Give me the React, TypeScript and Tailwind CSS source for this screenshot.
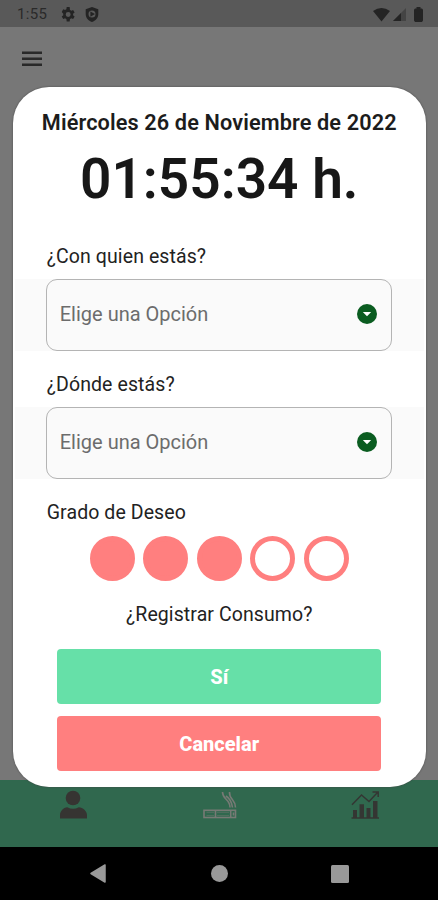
import type { ReactNode } from "react";

function StatusBar() {
  return (
    <header className="flex h-[27px] shrink-0 items-center bg-[#595959] pt-[2px] pr-[15px] pl-[17px] text-[#242424]">
      <span className="w-[43px] text-[15px] leading-none tracking-[0.3px] text-[#2a2a2a]">1:55</span>
      <svg width="15" height="15" viewBox="2 2 20 20" fill="currentColor">
        <path fillRule="evenodd" d="M19.4 13a7.500 7.500 0 0 0 0-2l2.100-1.650-2-3.460-2.500 1a7.300 7.300 0 0 0-1.700-1L14.900 2h-4l-.4 3.100a7.300 7.300 0 0 0-1.700 1l-2.500-1-2 3.460L6.400 11a7.500 7.500 0 0 0 0 2l-2.100 1.650 2 3.460 2.500-1a7.300 7.300 0 0 0 1.700 1l.4 3.100h4l.4-3.100a7.300 7.300 0 0 0 1.700-1l2.500 1 2-3.460zM12.900 8.700a3.300 3.300 0 1 1 0 6.600 3.300 3.300 0 0 1 0-6.600z" />
      </svg>
      <svg className="ml-[10px]" width="14" height="15" viewBox="0 0 14 15">
        <path fill="currentColor" fillRule="evenodd" d="M7 0 13.300 2.300V7.300C13.300 10.800 10.600 13.900 7 15 3.400 13.900.7 10.800.7 7.300V2.300zM7 3.600A3.500 3.500 0 1 0 7 10.600 3.500 3.500 0 0 0 7 3.600zM5.400 4.500 10 7.100 5.400 9.700z" />
      </svg>
      <div className="ml-auto flex items-center">
        <svg width="17" height="14" viewBox="0 0 17 14" fill="currentColor">
          <path d="M0 3Q8.500-2.800 17 3L8.500 13.500z" />
        </svg>
        <svg className="ml-[3px]" width="13" height="13" viewBox="0 0 13 13">
          <path d="M13 0V13H0z" fill="#444" />
          <path d="M8 5V13H0z" fill="#242424" />
        </svg>
        <svg className="ml-[8px]" width="9" height="15" viewBox="0 0 9 15" fill="currentColor">
          <path d="M2.500 1.500V0h4v1.500H8L9 2.800V13.500L8 15H1L0 13.500V2.800L1 1.500z" />
        </svg>
      </div>
    </header>
  );
}

function TabBar() {
  return (
    <nav className="flex h-[67px] shrink-0 items-start justify-between bg-[#30684e] pt-[10px] pr-[58px] pl-[60px]">
      <svg width="27" height="29" viewBox="0 0 27 29" fill="#363432">
        <circle cx="13" cy="8" r="7.300" />
        <path d="M0 28.500V25C0 21 3.500 17.800 7.300 17.300Q13 20.400 18.800 17.300C23 17.800 27 21 27 25V28.500z" />
      </svg>
      <svg className="ml-[2px]" width="34" height="29" viewBox="0 0 34 29" fill="none" stroke="#777a75" strokeWidth="1.600">
        <rect x="1" y="20.300" width="31.500" height="7.200" />
        <path d="M3.500 22.300H11M14 22.300H26M3.500 25.600H11M14 25.600H26" strokeWidth="0.500" />
        <path d="M12.500 20V28M27.700 20V28M30.500 22.500V25.500" />
        <path d="M19.500 2C19.500 10 27 8.500 27 17.500M26.500 2C26 10 32.500 9 32.500 17.500M23 6Q28.500 9.500 29.500 17.500" />
      </svg>
      <svg width="29" height="29" viewBox="0 0 29 29">
        <path d="M2 20H6V28H2zM8.500 14.300H13V28H8.500zM15.500 18H19.500V28H15.500zM22 11H26.500V28H22z" fill="#343633" />
        <path d="M.5 28H28M1 14.800 10.500 5 18 11.500 26.500 2.500M21.500 2H27.200V7" fill="none" stroke="#343633" strokeWidth="1.500" />
      </svg>
    </nav>
  );
}

function SystemNav() {
  return (
    <footer className="flex h-[53px] shrink-0 items-center justify-between bg-black pr-[89px] pl-[90px]">
      <svg width="16" height="19" viewBox="0 0 16 19">
        <path d="M15 1V18L1 9.500z" fill="#999" stroke="#999" strokeWidth="1.500" strokeLinejoin="round" />
      </svg>
      <span className="ml-[2px] size-[17px] rounded-full bg-[#999]" />
      <span className="size-[18px] rounded-[1.5px] bg-[#999]" />
    </footer>
  );
}

function SelectField({ label }: { label: string }) {
  return (
    <section className="h-[128px]">
      <h2 className="h-[34px] pl-[34px] text-[19.500px] leading-[23px] tracking-[0.090px] text-[#222]">{label}</h2>
      <div className="mx-[2px] flex h-[72px] bg-[#fafafa] pr-[32px] pl-[31px]">
        <button className="flex w-full items-center justify-between rounded-[11px] border border-[#b4b4b4] pr-[14px] pb-[2px] pl-[13px]">
          <span className="text-[20px] leading-none whitespace-nowrap text-[#6c6c6c]">Elige una Opción</span>
          <svg width="20" height="20" viewBox="0 0 20 20">
            <circle cx="10" cy="10" r="10" fill="#0a5c20" />
            <path d="M5.800 8H14.200L10 12.200z" fill="#fff" />
          </svg>
        </button>
      </div>
    </section>
  );
}

function ActionButton({ className, children }: { className: string; children: ReactNode }) {
  return (
    <button className={`h-[55px] w-[324px] rounded-[4px] pt-[2px] text-[20px] font-extrabold text-white ${className}`}>{children}</button>
  );
}

function ConsumptionDialog() {
  const desire = [true, true, true, false, false];
  return (
    <div role="dialog" className="absolute top-[87px] left-[12.75px] flex h-[699.5px] w-[413px] flex-col rounded-[36px] bg-white shadow-[0_0_2px_#444]">
      <p className="mt-[23px] text-center text-[21.700px] leading-[26px] font-semibold tracking-[0.120px] whitespace-nowrap text-[#1c1c1c]">
        Miércoles 26 de Noviembre de 2022
      </p>
      <h1 className="mt-[10px] text-center text-[55px] leading-[66px] font-semibold whitespace-nowrap text-[#171717]">01:55:34 h.</h1>
      <div className="mt-[33px]">
        <SelectField label="¿Con quien estás?" />
        <SelectField label="¿Dónde estás?" />
      </div>
      <h2 className="pl-[34px] text-[19.500px] leading-[23px] tracking-[0.090px] text-[#222]">Grado de Deseo</h2>
      <div className="mt-[11.5px] flex justify-center gap-[8.600px]">
        {desire.map((filled, i) => (
          <span key={i} className={`size-[45px] rounded-full border-[5px] border-[#ff7f7f] ${filled ? "bg-[#ff7f7f]" : "bg-white"}`} />
        ))}
      </div>
      <p className="mt-[22px] text-center text-[19.500px] leading-[23px] tracking-[0.090px] text-[#222]">¿Registrar Consumo?</p>
      <div className="mt-[23px] flex flex-col items-center gap-[12px]">
        <ActionButton className="bg-[#66e0a8]">Sí</ActionButton>
        <ActionButton className="bg-[#ff7f7f]">Cancelar</ActionButton>
      </div>
    </div>
  );
}

export default function App() {
  return (
    <div className="relative flex h-[900px] w-[438px] flex-col overflow-hidden bg-[#777] font-[Roboto,'Liberation_Sans',sans-serif]">
      <StatusBar />
      <main className="flex-1 pt-[24px] pl-[22px]">
        <svg width="20" height="16" viewBox="0 0 20 16" stroke="#292929" strokeWidth="2.400">
          <path d="M0 1.700H20M0 7.700H20M0 13.700H20" />
        </svg>
      </main>
      <TabBar />
      <SystemNav />
      <ConsumptionDialog />
    </div>
  );
}
